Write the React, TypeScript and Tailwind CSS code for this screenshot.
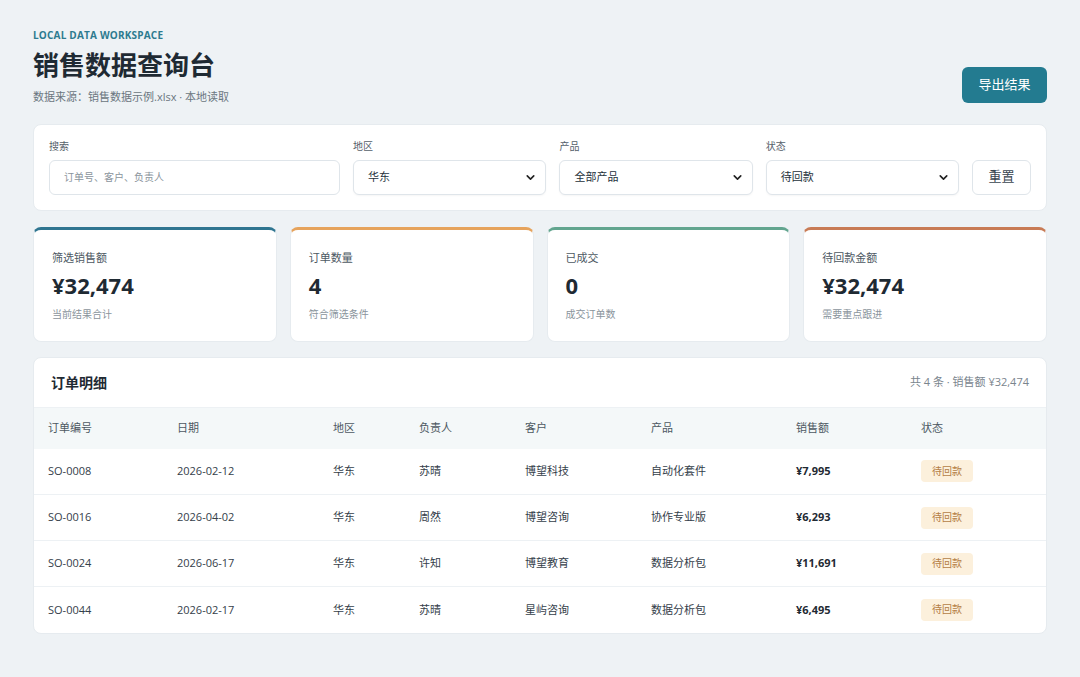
import { ChevronDown } from "lucide-react";

const rows = [
  { id: "SO-0008", date: "2026-02-12", region: "华东", owner: "苏晴", customer: "博望科技", product: "自动化套件", amount: "¥7,995" },
  { id: "SO-0016", date: "2026-04-02", region: "华东", owner: "周然", customer: "博望咨询", product: "协作专业版", amount: "¥6,293" },
  { id: "SO-0024", date: "2026-06-17", region: "华东", owner: "许知", customer: "博望教育", product: "数据分析包", amount: "¥11,691" },
  { id: "SO-0044", date: "2026-02-17", region: "华东", owner: "苏晴", customer: "星屿咨询", product: "数据分析包", amount: "¥6,495" },
];

const stats = [
  { label: "筛选销售额", value: "¥32,474", note: "当前结果合计", bar: "border-t-[#2f7590]" },
  { label: "订单数量", value: "4", note: "符合筛选条件", bar: "border-t-[#e6a35c]" },
  { label: "已成交", value: "0", note: "成交订单数", bar: "border-t-[#62a58f]" },
  { label: "待回款金额", value: "¥32,474", note: "需要重点跟进", bar: "border-t-[#c87b55]" },
];

const cols = [
  { title: "订单编号", w: "w-[129px]" },
  { title: "日期", w: "w-[156px]" },
  { title: "地区", w: "w-[86px]" },
  { title: "负责人", w: "w-[106px]" },
  { title: "客户", w: "w-[126px]" },
  { title: "产品", w: "w-[145px]" },
  { title: "销售额", w: "w-[125px]" },
  { title: "状态", w: "" },
];

function SelectBox({ value }: { value: string }) {
  return (
    <div className="flex h-[35px] w-full items-center justify-between rounded-md border border-[#dfe5ea] bg-white pl-[14px] pr-[8px] text-[11px] text-[#25313b] shadow-[0_1px_2px_rgba(0,0,0,0.04)]">
      <span>{value}</span>
      <ChevronDown className="h-[13px] w-[13px] text-[#222]" strokeWidth={3} />
    </div>
  );
}

export default function App() {
  return (
    <div
      className="min-h-[677px] bg-[#eef2f5] px-[33px] pt-[28px] pb-[40px]"
      style={{ fontFamily: '"Open Sans", "Noto Sans CJK SC", sans-serif' }}
    >
      <div className="flex items-end justify-between">
        <div>
          <div className="text-[10px] font-bold tracking-[0.2px] text-[#2d7b8f]">LOCAL DATA WORKSPACE</div>
          <h1 className="mt-[5px] text-[26px] font-bold leading-[34px] text-[#1f2a33]">销售数据查询台</h1>
          <div className="mt-[7px] text-[11px] text-[#6b7680]">数据来源：销售数据示例.xlsx · 本地读取</div>
        </div>
        <button className="mb-[3px] h-[36px] w-[85px] rounded-md bg-[#237b90] text-[13px] text-white">导出结果</button>
      </div>

      <div className="mt-[18px] flex items-end gap-[13px] rounded-lg border border-[#e6ebef] bg-white px-[15px] pt-[14px] pb-[15px]">
        <div className="flex w-[292px] flex-col gap-[6px]">
          <label className="text-[10px] text-[#55606a]">搜索</label>
          <div className="flex h-[35px] items-center rounded-md border border-[#dfe5ea] bg-white px-[14px] text-[10px] text-[#8a949c]">
            订单号、客户、负责人
          </div>
        </div>
        <div className="flex w-[194px] flex-col gap-[6px]">
          <label className="text-[10px] text-[#55606a]">地区</label>
          <SelectBox value="华东" />
        </div>
        <div className="flex w-[194px] flex-col gap-[6px]">
          <label className="text-[10px] text-[#55606a]">产品</label>
          <SelectBox value="全部产品" />
        </div>
        <div className="flex w-[194px] flex-col gap-[6px]">
          <label className="text-[10px] text-[#55606a]">状态</label>
          <SelectBox value="待回款" />
        </div>
        <button className="h-[35px] w-[59px] rounded-md border border-[#dfe5ea] bg-white text-[13px] text-[#3a4650]">重置</button>
      </div>

      <div className="mt-[16px] grid grid-cols-4 gap-[13px]">
        {stats.map((s) => (
          <div key={s.label} className={`h-[115px] rounded-lg border border-[#e6ebef] border-t-[3px] ${s.bar} bg-white px-[18px] pt-[20px]`}>
            <div className="text-[11px] text-[#4d5862]">{s.label}</div>
            <div className="mt-[4px] text-[22px] font-bold leading-[30px] text-[#1f2a33]">{s.value}</div>
            <div className="mt-[7px] text-[10px] text-[#8a949c]">{s.note}</div>
          </div>
        ))}
      </div>

      <div className="mt-[15px] overflow-hidden rounded-lg border border-[#e6ebef] bg-white">
        <div className="flex h-[50px] items-center justify-between border-b border-[#edf1f4] px-[17px]">
          <div className="text-[14px] font-bold text-[#1f2a33]">订单明细</div>
          <div className="text-[11px] text-[#7a858e]">共 4 条 · 销售额 ¥32,474</div>
        </div>
        <table className="w-full table-fixed border-collapse text-[11px]">
          <thead>
            <tr className="h-[41px] bg-[#f4f8f9]">
              {cols.map((c) => (
                <th key={c.title} className={`${c.w} pl-[14px] text-left font-normal text-[#4d5862]`}>
                  {c.title}
                </th>
              ))}
            </tr>
          </thead>
          <tbody>
            {rows.map((r, i) => (
              <tr key={r.id} className={`h-[46px] text-[#34404a] ${i < rows.length - 1 ? "border-b border-[#edf1f4]" : ""}`}>
                <td className="pl-[14px]">{r.id}</td>
                <td className="pl-[14px]">{r.date}</td>
                <td className="pl-[14px]">{r.region}</td>
                <td className="pl-[14px]">{r.owner}</td>
                <td className="pl-[14px]">{r.customer}</td>
                <td className="pl-[14px]">{r.product}</td>
                <td className="pl-[14px] font-bold text-[#1f2a33]">{r.amount}</td>
                <td className="pl-[14px]">
                  <span className="inline-flex h-[22px] w-[52px] items-center justify-center rounded-[4px] bg-[#fcf0dc] text-[10px] text-[#b47e46]">
                    待回款
                  </span>
                </td>
              </tr>
            ))}
          </tbody>
        </table>
      </div>
    </div>
  );
}
